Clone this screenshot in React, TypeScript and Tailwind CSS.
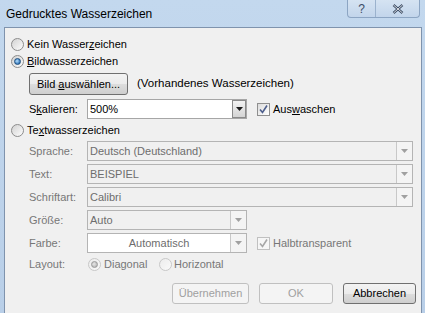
import React from 'react';

interface RadioProps {
  checked?: boolean;
  disabled?: boolean;
}

function Radio({ checked, disabled }: RadioProps) {
  return (
    <span
      className={`flex h-[13px] w-[13px] shrink-0 items-center justify-center rounded-full border ${
        disabled
          ? 'border-[#c8c8c8] bg-[linear-gradient(135deg,#ececec,#fafafa)]'
          : 'border-[#8c8c8c] bg-[linear-gradient(135deg,#d2d2d2,#fdfdfd)]'
      }`}
    >
      {checked && (
        <span
          className={`h-[7px] w-[7px] rounded-full ${
            disabled
              ? 'border border-[#9a9a9a] bg-[radial-gradient(circle_at_40%_40%,#e8e8e8,#a8a8a8)]'
              : 'border border-[#1d4f80] bg-[radial-gradient(circle_at_40%_40%,#b6e1ff,#2d6fb4_75%)]'
          }`}
        />
      )}
    </span>
  );
}

function Checkbox({ disabled }: { disabled?: boolean }) {
  return (
    <span
      className={`flex h-[13px] w-[13px] shrink-0 items-center justify-center border ${
        disabled ? 'border-[#c0c0c0] bg-[#f6f6f6]' : 'border-[#8f8f8f] bg-[linear-gradient(135deg,#dcdcdc,#ffffff)]'
      }`}
    >
      <svg width="9" height="9" viewBox="0 0 9 9">
        <path
          d="M1 4.5 L3.5 7.5 L8 0.5"
          fill="none"
          stroke={disabled ? '#a6a6a6' : '#4d5e8c'}
          strokeWidth="1.6"
        />
      </svg>
    </span>
  );
}

function Arrow({ color }: { color: string }) {
  return (
    <svg width="7" height="4" viewBox="0 0 7 4">
      <path d="M0 0 H7 L3.5 4 Z" fill={color} />
    </svg>
  );
}

interface ComboProps {
  value: string;
  wide?: boolean;
  disabled?: boolean;
  white?: boolean;
  center?: boolean;
}

function Combo({ value, wide, disabled, white, center }: ComboProps) {
  return (
    <div
      className={`flex h-[20px] items-stretch border ${wide ? 'w-[326px]' : 'w-[160px]'} ${
        disabled ? 'border-[#b4b4b4]' : 'border-[#a6a6a6]'
      } ${white || !disabled ? 'bg-white' : 'bg-[#f0f0f0]'}`}
    >
      <div
        className={`flex flex-1 items-center px-[2px] ${center ? 'justify-center' : ''} ${
          disabled ? 'text-[#6d6d6d]' : 'text-black'
        }`}
      >
        {value}
      </div>
      {disabled ? (
        <div className="flex w-[16px] items-center justify-center border-l border-[#c8c8c8] bg-[#f4f4f4]">
          <Arrow color="#a0a0a0" />
        </div>
      ) : (
        <div className="flex w-[14px] items-center justify-center border border-[#8a8a8a] bg-[linear-gradient(#f2f2f2,#d4d4d4)]">
          <Arrow color="#1a1a1a" />
        </div>
      )}
    </div>
  );
}

function Row({ label, children }: { label: string; children: React.ReactNode }) {
  return (
    <div className="mt-[3px] flex h-[20px] items-center pl-[24px]">
      <span className="w-[58px] text-[#777777]">{label}</span>
      {children}
    </div>
  );
}

export default function App() {
  return (
    <div className="flex h-[313px] w-[425px] flex-col overflow-hidden bg-[linear-gradient(#c3d8ee,#b9cfe8)] font-['Liberation_Sans',Arial,sans-serif] text-[11px] text-black">
      {/* Title bar */}
      <div className="flex h-[27px] shrink-0 items-start">
        <span className="mt-[5px] ml-[6px] flex-1 text-[12px]">Gedrucktes Wasserzeichen</span>
        <div className="mr-[5px] flex h-[18px] overflow-hidden rounded-b-[4px] border border-t-0 border-[#8ca5c3] bg-[linear-gradient(#d5e3f2,#c2d5eb)]">
          <div className="flex w-[28px] items-center justify-center border-r border-[#9bb2cd] text-[12px] text-[#3c4d66]">?</div>
          <div className="flex w-[43px] items-center justify-center">
            <svg width="12" height="10" viewBox="0 0 12 10">
              <path d="M1.5 1 L10.5 9 M10.5 1 L1.5 9" stroke="#3c4d66" strokeWidth="2.4" />
              <path d="M1.5 1 L10.5 9 M10.5 1 L1.5 9" stroke="#ffffff" strokeWidth="0.8" />
            </svg>
          </div>
        </div>
      </div>

      {/* Client area */}
      <div className="ml-[4px] mr-[3px] flex flex-1 flex-col border-l border-t border-r border-[#7f93ad] bg-[#f0f0f0] pr-[5px]">
        <div className="mt-[8px] flex h-[17px] items-center gap-[3px] pl-[6px]">
          <Radio />
          <span>
            Kein Wasser<span className="underline">z</span>eichen
          </span>
        </div>
        <div className="flex h-[17px] items-center gap-[3px] pl-[6px]">
          <Radio checked />
          <span>
            <span className="underline">B</span>ildwasserzeichen
          </span>
        </div>

        <div className="mt-[3px] flex h-[22px] items-center pl-[24px]">
          <button className="flex h-[22px] w-[99px] items-center justify-center rounded-[3px] border border-[#707070] bg-[linear-gradient(#f3f3f3_0%,#ebebeb_50%,#dddddd_51%,#cfcfcf_100%)] text-black">
            <span>
              Bild <span className="underline">a</span>uswählen...
            </span>
          </button>
          <span className="ml-[9px] text-[11.5px]">(Vorhandenes Wasserzeichen)</span>
        </div>

        <div className="mt-[4px] flex h-[20px] items-center pl-[24px]">
          <span className="w-[58px]">
            S<span className="underline">k</span>alieren:
          </span>
          <Combo value="500%" />
          <div className="ml-[10px] flex items-center gap-[3px]">
            <Checkbox />
            <span>
              Aus<span className="underline">w</span>aschen
            </span>
          </div>
        </div>

        <div className="mt-[3px] flex h-[17px] items-center gap-[3px] pl-[6px]">
          <Radio />
          <span>
            Te<span className="underline">x</span>twasserzeichen
          </span>
        </div>

        <div className="mt-[-1px]">
          <Row label="Sprache:">
            <Combo value="Deutsch (Deutschland)" wide disabled />
          </Row>
          <Row label="Text:">
            <Combo value="BEISPIEL" wide disabled />
          </Row>
          <Row label="Schriftart:">
            <Combo value="Calibri" wide disabled />
          </Row>
          <Row label="Größe:">
            <Combo value="Auto" disabled />
          </Row>
          <Row label="Farbe:">
            <Combo value="Automatisch" disabled white center />
            <div className="ml-[10px] flex items-center gap-[3px]">
              <Checkbox disabled />
              <span className="text-[#777777]">Halbtransparent</span>
            </div>
          </Row>
        </div>

        <div className="mt-[3px] flex h-[16px] items-center pl-[24px] text-[#777777]">
          <span className="w-[59px]">Layout:</span>
          <Radio checked disabled />
          <span className="ml-[3px] w-[55px]">Diagonal</span>
          <Radio disabled />
          <span className="ml-[2px]">Horizontal</span>
        </div>

        <div className="mt-[11px] flex justify-end gap-[10px]">
          <button className="h-[21px] w-[77px] rounded-[3px] border border-[#c0c0c0] bg-[#f4f4f4] text-[#a0a0a0]">
            Übernehmen
          </button>
          <button className="h-[21px] w-[74px] rounded-[3px] border border-[#c0c0c0] bg-[#f4f4f4] text-[#a0a0a0]">
            OK
          </button>
          <button className="h-[21px] w-[73px] rounded-[3px] border border-[#707070] bg-[linear-gradient(#f3f3f3_0%,#ebebeb_50%,#dddddd_51%,#cfcfcf_100%)] text-black">
            Abbrechen
          </button>
        </div>
      </div>
    </div>
  );
}
